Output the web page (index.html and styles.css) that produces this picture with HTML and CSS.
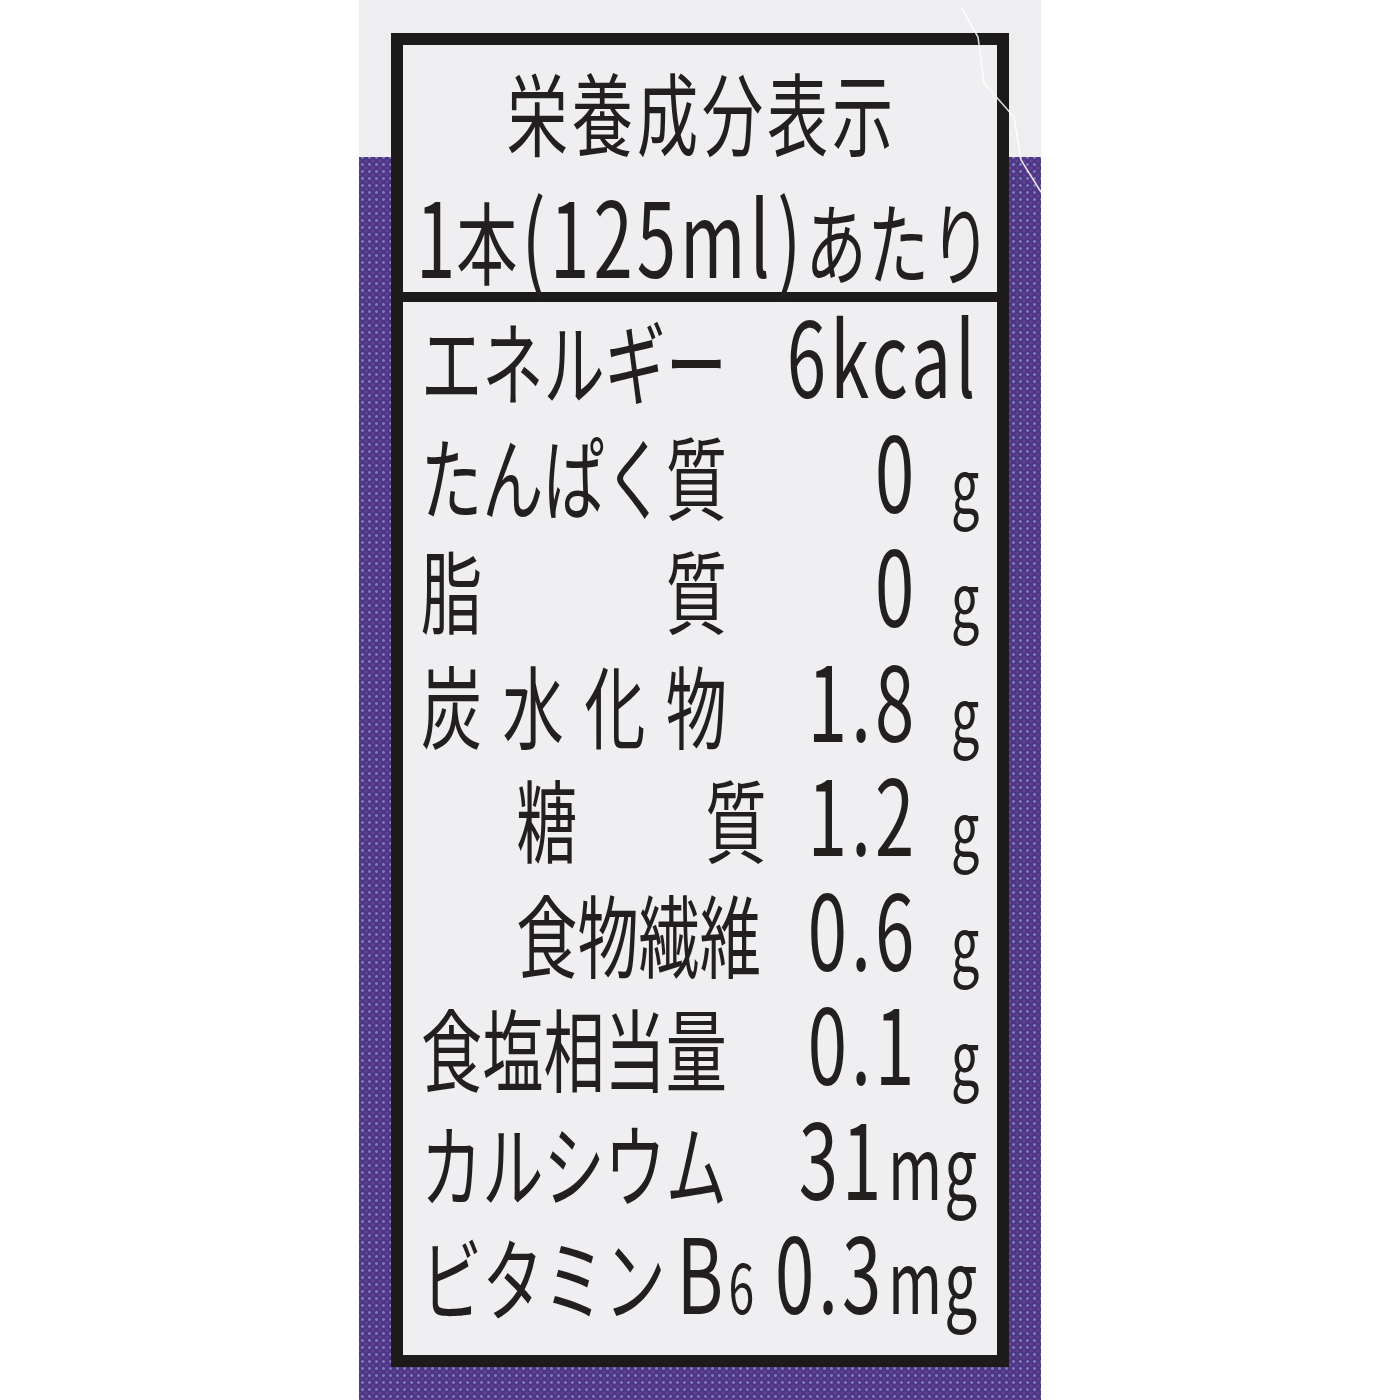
FILE: index.html
```html
<!DOCTYPE html>
<html lang="ja">
<head>
<meta charset="utf-8">
<title>栄養成分表示</title>
<link rel="stylesheet" href="styles.css">
</head>
<body>
<div class="page">
  <div class="strip"></div>
  <div class="label">
    <div class="panel">
      <div class="canvas">
        <div class="head">
          <div class="title">栄養成分表示</div>
          <div class="serving"><span class="n">1</span><span>本</span><span class="n paren">(</span><span class="n amount">125ml</span><span class="n paren">)</span><span>あたり</span></div>
        </div>
        <div class="divider"></div>
        <div class="rows">
          <div class="row"><span class="name">エネルギー</span><span class="val"><span class="n">6kcal</span></span></div>
          <div class="row"><span class="name">たんぱく質</span><span class="val"><span class="n">0</span><span class="g">g</span></span></div>
          <div class="row"><span class="name spread w5"><span>脂</span><span>質</span></span><span class="val"><span class="n">0</span><span class="g">g</span></span></div>
          <div class="row"><span class="name spread w5"><span>炭</span><span>水</span><span>化</span><span>物</span></span><span class="val"><span class="n">1.8</span><span class="g">g</span></span></div>
          <div class="row"><span class="name spread w4 sub"><span>糖</span><span>質</span></span><span class="val"><span class="n">1.2</span><span class="g">g</span></span></div>
          <div class="row"><span class="name sub">食物繊維</span><span class="val"><span class="n">0.6</span><span class="g">g</span></span></div>
          <div class="row"><span class="name">食塩相当量</span><span class="val"><span class="n">0.1</span><span class="g">g</span></span></div>
          <div class="row"><span class="name">カルシウム</span><span class="val"><span class="n">31</span><span class="mgu">mg</span></span></div>
          <div class="row"><span class="name">ビタミン<span class="n vb">B</span><span class="small">6</span></span><span class="val"><span class="n">0.3</span><span class="mgu">mg</span></span></div>
        </div>
      </div>
    </div>
    <svg class="scratch" width="80" height="200" viewBox="0 0 80 200" aria-hidden="true">
      <polyline points="0,7 17,37 23,83 53,117 60,160 80,192" fill="none" stroke="#ffffff" stroke-width="1.6" stroke-opacity="0.85"/>
    </svg>
  </div>
  <div class="strip"></div>
</div>
</body>
</html>
```
FILE: styles.css
```css
html, body {
  margin: 0;
  padding: 0;
  background: #ffffff;
}

.page {
  display: flex;
  width: 1400px;
  height: 1400px;
  overflow: hidden;
  font-family: "Noto Sans CJK JP", "Noto Sans", sans-serif;
  font-weight: 400;
  color: #231f1e;
}

.strip {
  flex: 1;
  background: #ffffff;
}

.label {
  position: relative;
  width: 682px;
  flex: none;
  padding-top: 33px;
  padding-left: 32px;
  box-sizing: border-box;
  background:
    linear-gradient(#eeedf0, #eeedf0) 0 0 / 100% 157px no-repeat,
    radial-gradient(circle, rgba(205, 195, 240, 0.45) 0 1px, transparent 1.8px) 0 0 / 7px 7px,
    radial-gradient(circle, rgba(165, 85, 165, 0.4) 0 1px, transparent 1.8px) 3.5px 3.5px / 7px 7px,
    #4a3786;
}

.panel {
  width: 618px;
  height: 1334px;
  box-sizing: border-box;
  border: 12px solid #1d1a1a;
  background: #efeef0;
  overflow: hidden;
}

.canvas {
  width: 873.5px;
  height: 100%;
  transform: scaleX(0.68);
  transform-origin: 0 0;
}

.head {
  height: 247px;
  padding-top: 10px;
  box-sizing: border-box;
}

.title {
  font-size: 90px;
  line-height: 110px;
  height: 110px;
  letter-spacing: 5.6px;
  text-align: center;
  padding-left: 5.6px;
  white-space: nowrap;
}

.serving {
  margin-top: 17.7px;
  height: 100px;
  display: flex;
  flex-wrap: nowrap;
  align-items: baseline;
  justify-content: center;
  font-size: 90px;
  line-height: 100px;
  letter-spacing: 1.5px;
  padding-left: 12px;
  white-space: nowrap;
}

.serving > span {
  flex: none;
}

.n {
  font-size: 104px;
  line-height: 100px;
}

.paren {
  margin: 0 5px;
}

.amount {
  letter-spacing: 6px;
}

.divider {
  height: 10px;
  background: #1d1a1a;
}

.rows {
  padding-top: 1px;
}

.row {
  display: flex;
  align-items: baseline;
  height: 114.5px;
  line-height: 100px;
  font-size: 90px;
  padding: 0 26px 0 26.5px;
  white-space: nowrap;
}

.name {
  display: flex;
  align-items: baseline;
  white-space: nowrap;
}

.spread {
  justify-content: space-between;
}

.w5 {
  width: 450px;
}

.w4 {
  width: 368px;
}

.sub {
  margin-left: 140px;
}

.vb {
  margin-left: 16px;
}

.small {
  font-size: 68px;
  line-height: 100px;
  margin-left: 8px;
}

.val {
  margin-left: auto;
  display: flex;
  align-items: baseline;
  white-space: nowrap;
}

.val .n {
  letter-spacing: 6px;
}

.g {
  font-size: 74px;
  line-height: 100px;
  margin-left: 48px;
}

.mgu {
  font-size: 86px;
  line-height: 100px;
  letter-spacing: 3px;
  margin-left: 4px;
}

.scratch {
  position: absolute;
  top: 0;
  right: 0;
}
```
